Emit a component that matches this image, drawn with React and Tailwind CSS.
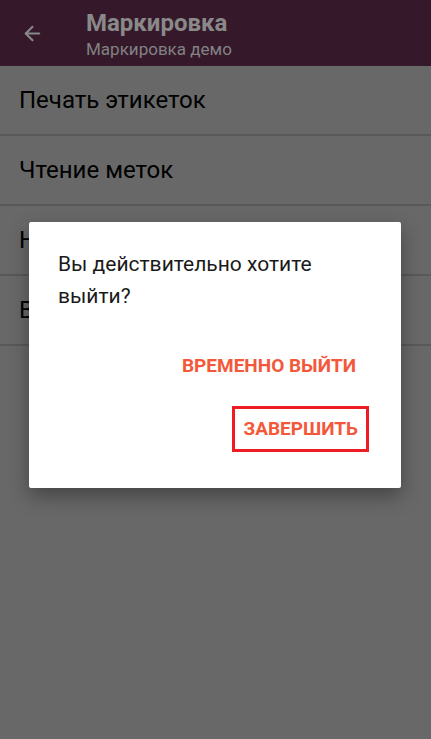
import { ArrowLeft } from 'lucide-react';

const items = ['Печать этикеток', 'Чтение меток', 'Настройки', 'Выход'];

export default function App() {
  return (
    <div
      className="relative w-[431px] h-[739px] overflow-hidden bg-[#686868]"
      style={{ fontFamily: 'Roboto, "Noto Sans", sans-serif' }}
    >
      <div className="h-[66px] bg-[#35192b] flex">
        <div className="w-[86px] flex items-center pl-[21px]">
          <ArrowLeft size={23} strokeWidth={2.2} className="text-[#888888]" />
        </div>
        <div className="flex flex-col pt-[9px]">
          <div className="text-[24px] leading-[28px] font-bold text-[#898989]">
            Маркировка
          </div>
          <div className="text-[17px] leading-[20px] mt-[2px] text-[#828282]">
            Маркировка демо
          </div>
        </div>
      </div>

      <div className="flex flex-col">
        {items.map(item => (
          <div key={item} className="h-[70px] flex items-center px-[19px] border-b-2 border-[#595959]">
            <span className="text-[24px] text-black">{item}</span>
          </div>
        ))}
      </div>

      <div className="absolute left-[29px] top-[222px] w-[372px] h-[266px] bg-white rounded-[2px] shadow-[0_8px_20px_rgba(0,0,0,0.35)] flex flex-col">
        <p className="pl-[29px] pr-[40px] pt-[26px] text-[21px] leading-[32px] text-[#1a1a1a]">
          Вы действительно хотите выйти?
        </p>
        <div className="flex flex-col items-end pr-[45px] mt-[42px] gap-[28px]">
          <span className="text-[19px] leading-[24px] font-bold text-[#f4583b]">
            ВРЕМЕННО ВЫЙТИ
          </span>
          <span className="-mr-[13px] border-[3px] border-[#ee1c24] px-[8px] py-[8px] text-[19px] leading-[24px] font-bold text-[#f4583b]">
            ЗАВЕРШИТЬ
          </span>
        </div>
      </div>
    </div>
  );
}
